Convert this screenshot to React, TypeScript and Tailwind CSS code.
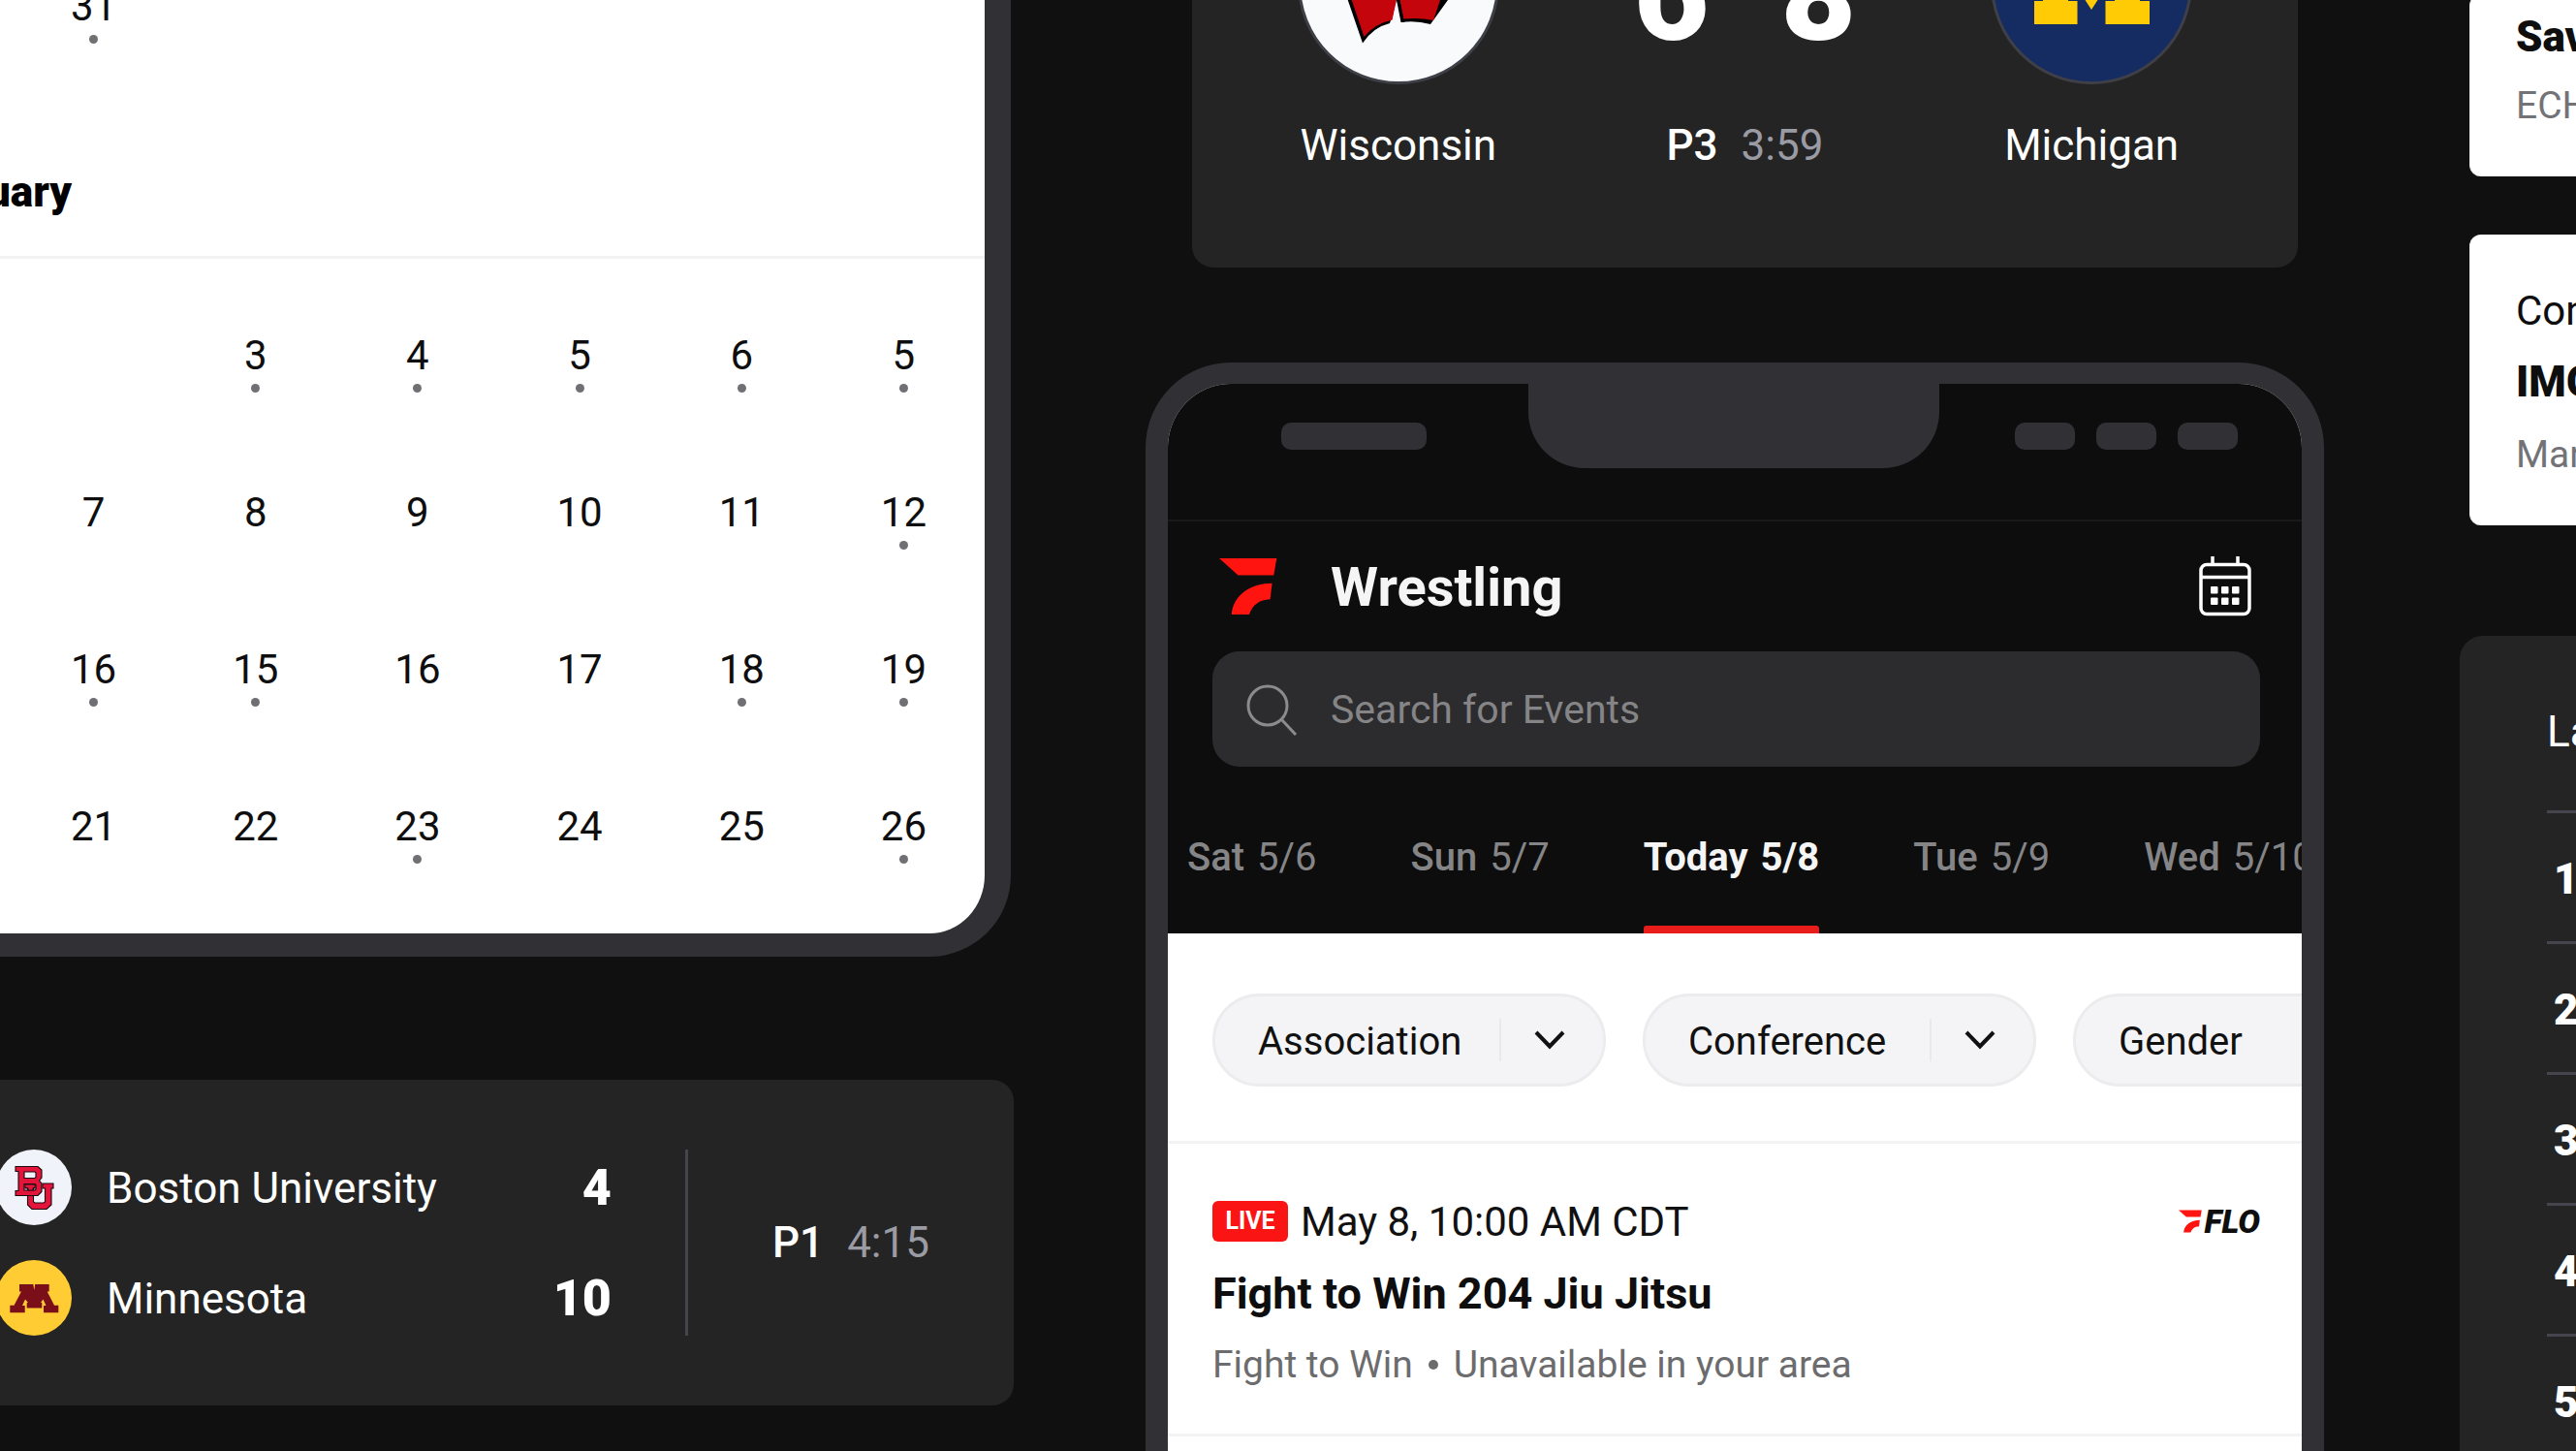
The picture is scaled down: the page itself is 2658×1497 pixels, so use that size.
import React from "react";

type Day = { n: number; dot?: boolean };

const januaryDays: (Day | null)[] = [{ n: 31, dot: true }];

const februaryDays: (Day | null)[] = [
  null,
  { n: 3, dot: true },
  { n: 4, dot: true },
  { n: 5, dot: true },
  { n: 6, dot: true },
  { n: 5, dot: true },
  { n: 7 },
  { n: 8 },
  { n: 9 },
  { n: 10 },
  { n: 11 },
  { n: 12, dot: true },
  { n: 16, dot: true },
  { n: 15, dot: true },
  { n: 16 },
  { n: 17 },
  { n: 18, dot: true },
  { n: 19, dot: true },
  { n: 21 },
  { n: 22 },
  { n: 23, dot: true },
  { n: 24 },
  { n: 25 },
  { n: 26, dot: true },
];

const tabs = [
  { day: "Sat", date: "5/6" },
  { day: "Sun", date: "5/7" },
  { day: "Today", date: "5/8", active: true },
  { day: "Tue", date: "5/9" },
  { day: "Wed", date: "5/10" },
];

function DayGrid({ days }: { days: (Day | null)[] }) {
  return (
    <div className="grid grid-cols-6 gap-y-[100px] pl-[13px]">
      {days.map((d, i) =>
        d ? (
          <button key={i} type="button" className="flex h-[62px] flex-col items-center gap-[5px] text-[42px] leading-[48px] text-[#0e0e0e]">
            <span>{d.n}</span>
            {d.dot && <span className="size-[9px] rounded-full bg-[#6f6f74]" />}
          </button>
        ) : (
          <div key={i} />
        ),
      )}
    </div>
  );
}

function FloMark({ className }: { className: string }) {
  return (
    <svg viewBox="55 42 178 178" className={className} fill="#ff1410" aria-hidden="true">
      <path d="M55 45H231L222 97H113Z" />
      <path d="M93 217C97 158 150 121 217 121L211 170C178 171 156 188 147 217Z" />
    </svg>
  );
}

function BostonCrest() {
  return (
    <svg viewBox="0 0 78 78" className="size-[78px] shrink-0" role="img" aria-label="Boston University">
      <circle cx="39" cy="39" r="39" fill="#f0f3f9" />
      <g fill="#e4153a" stroke="#1c0a10" strokeWidth="1.1" fillRule="evenodd">
        <path d="M30 35H40V40H38.5V54L40 55H49L50.5 54V40H48V35H59V40H57V57L52 61.5H37L32.5 57V40H30Z" />
        <path d="M20 17.5H43L47 21V29L44.5 32L47 35V43.5L43 47.5H20V42.5H23V22.5H20ZM29 23V29.5H40L41 28.5V24L40 23ZM29 35.5V42H40L41 41V36.5L40 35.5Z" />
        <path d="M30 36H40V39.5H38V42H33V39.5H30Z" strokeWidth="0.8" />
      </g>
    </svg>
  );
}

function MinnesotaCrest() {
  return (
    <svg viewBox="0 0 78 78" className="size-[78px] shrink-0" role="img" aria-label="Minnesota">
      <circle cx="39" cy="39" r="39" fill="#ffcc33" />
      <path
        d="M24 25H38.3L39.3 31 40.2 25H54.7V32.5H52.7L60 46.7H64.3V54.3H49V47H51.5L48.5 40.5 46 44H47.3V49.5H31.7V44H33L30 40.5 27 47H29.7V54.3H14.3V46.7H18.5L26 32.5H24Z"
        fill="#7a0f1a"
      />
    </svg>
  );
}

function WisconsinCrest() {
  return (
    <svg viewBox="0 0 208 208" className="size-[208px]" role="img" aria-label="Wisconsin">
      <circle cx="104" cy="104" r="102.5" fill="#f9fafc" stroke="#3f3f47" strokeWidth="3" />
      <path d="M20 40H86L96 78 108 40H190L155 121 137 146Q122 142 107 144L102 124 95 145Q78 149 67 165.500L50 116Z" fill="#000" />
      <path d="M26 44H82L95 92 110 44H184L147 121 140 142Q126 139 109 140.500L104 114 102 121 98 141.500Q80 145 68.500 159L54 116Z" fill="#c5050c" />
      <path d="M102 121 97.500 142 107 144 105 128Z" fill="#f9fafc" />
      <path d="M105.500 121H102L103 126 106.500 144H110Z" fill="#000" />
    </svg>
  );
}

function MichiganCrest() {
  return (
    <svg viewBox="0 0 208 208" className="size-[208px]" role="img" aria-label="Michigan">
      <circle cx="104" cy="104" r="102.500" fill="#152c62" stroke="#3f3f47" strokeWidth="3" />
      <path
        d="M45 60H80L104 94 128 60H163V82H154V122H164V146H118.500V122H128V94L104 131 80 94V122H89.500V146H45V122H54V82H45Z"
        fill="#ffcb05"
      />
    </svg>
  );
}

function CalendarIcon() {
  return (
    <svg viewBox="0 0 54 62" className="h-[62px] w-[54px]" fill="none" stroke="#fff" strokeWidth="3.500" aria-hidden="true">
      <rect x="2" y="8.500" width="50" height="51" rx="6" />
      <path d="M2 21.500H52M14 0V9M40 0V9" />
      <g fill="#fff" stroke="none">
        <rect x="12" y="31" width="7.500" height="7.500" rx="1" />
        <rect x="23" y="31" width="7.500" height="7.500" rx="1" />
        <rect x="34" y="31" width="7.500" height="7.500" rx="1" />
        <rect x="12" y="42.500" width="7.500" height="7.500" rx="1" />
        <rect x="23" y="42.500" width="7.500" height="7.500" rx="1" />
        <rect x="34" y="42.500" width="7.500" height="7.500" rx="1" />
      </g>
    </svg>
  );
}

function SearchIcon() {
  return (
    <svg viewBox="0 0 54 54" className="size-[54px] shrink-0" fill="none" stroke="#8b8b8d" strokeWidth="3" aria-hidden="true">
      <circle cx="23" cy="23" r="20" />
      <path d="M37.500 37.500 52 53" />
    </svg>
  );
}

function FilterSelect({ label }: { label: string }) {
  return (
    <div className="flex h-24 w-[406px] shrink-0 items-center rounded-full border-[3px] border-[#ececee] bg-[#f4f4f6]">
      <select aria-label={label} className="h-full min-w-0 flex-1 appearance-none bg-transparent pt-[3px] pl-[44px] text-[40px] text-[#111] outline-none">
        <option>{label}</option>
      </select>
      <span className="h-11 w-[2px] bg-[#e9e9eb]" />
      <span className="flex w-[105px] justify-center pr-[6px]">
        <svg viewBox="0 0 32 22" className="h-[22px] w-8" fill="none" stroke="#111" strokeWidth="4" aria-hidden="true">
          <path d="M2 3 16 17.500 30 3" />
        </svg>
      </span>
    </div>
  );
}

function TeamRow({ crest, name, score }: { crest: React.ReactNode; name: string; score: number }) {
  return (
    <div className="flex h-[78px] items-center gap-9 text-white">
      {crest}
      <span className="flex-1 pt-[2px] text-[44px]">{name}</span>
      <span className="pt-[2px] text-[52px] font-black">{score}</span>
    </div>
  );
}

function Clock({ period, time }: { period: string; time: string }) {
  return (
    <p className="flex items-center justify-center gap-6 text-[44px] leading-[52px]">
      <span className="font-medium text-white">{period}</span>
      <span className="text-[#9b9ba4]">{time}</span>
    </p>
  );
}

function LeftColumn() {
  return (
    <section className="-mt-[17px]">
      <div className="mr-[3px] overflow-hidden rounded-br-[84px] border-r-[27px] border-b-[24px] border-[#313035] bg-white">
        <DayGrid days={januaryDays} />
        <div className="mt-[127px] flex w-[74px] justify-end">
          <h2 className="text-[44px] leading-[52px] font-black text-black">February</h2>
        </div>
        <div className="mt-10 border-t-[3px] border-[#f3f3f3] pt-[76px] pb-[72px]">
          <DayGrid days={februaryDays} />
        </div>
      </div>
      <div className="mt-[127px] grid grid-cols-[minmax(0,710fr)_minmax(0,336fr)] rounded-r-[22px] bg-[#242424] py-[72px]">
        <div className="-ml-1 flex flex-col gap-9 border-r-[3px] border-[#46454d] pr-[76px]">
          <TeamRow crest={<BostonCrest />} name="Boston University" score={4} />
          <TeamRow crest={<MinnesotaCrest />} name="Minnesota" score={10} />
        </div>
        <div className="flex items-center justify-center">
          <Clock period="P1" time="4:15" />
        </div>
      </div>
    </section>
  );
}

function ScoreCard() {
  return (
    <div className="mr-[27px] ml-12 -mt-[188px] grid grid-cols-3 rounded-[22px] bg-[#242424] px-[34px] pt-[67px] pb-[100px] text-center text-white">
      <div className="flex flex-col items-center gap-[37px]">
        <WisconsinCrest />
        <p className="text-[44px] leading-[52px]">Wisconsin</p>
      </div>
      <div className="flex flex-col gap-[37px]">
        <div className="flex h-[208px] items-center justify-center gap-[74px] pt-6 text-[134px] font-black">
          <span>6</span>
          <span>8</span>
        </div>
        <Clock period="P3" time="3:59" />
      </div>
      <div className="flex flex-col items-center gap-[37px]">
        <MichiganCrest />
        <p className="text-[44px] leading-[52px]">Michigan</p>
      </div>
    </div>
  );
}

function PhoneStatus() {
  return (
    <div className="grid h-[142px] grid-cols-[minmax(0,372fr)_minmax(0,424fr)_minmax(0,374fr)] border-b-2 border-[#191919]">
      <div className="pt-10 pl-[117px]">
        <div className="h-7 w-[150px] rounded-[10px] bg-[#313035]" />
      </div>
      <div className="h-[87px] rounded-b-[58px] bg-[#313035]" />
      <div className="flex justify-end gap-[22px] pt-10 pr-[66px]">
        <div className="h-7 w-[62px] rounded-[10px] bg-[#313035]" />
        <div className="h-7 w-[62px] rounded-[10px] bg-[#313035]" />
        <div className="h-7 w-[62px] rounded-[10px] bg-[#313035]" />
      </div>
    </div>
  );
}

function Phone() {
  return (
    <div className="mt-[98px] h-[1300px] overflow-hidden rounded-t-[88px] border-x-[23px] border-t-[22px] border-[#313035] bg-white">
      <div className="bg-[#0d0d0d]">
        <PhoneStatus />
        <header className="flex h-[134px] items-center pr-[52px] pl-[53px]">
          <FloMark className="size-[60px]" />
          <h1 className="flex-1 pt-[2px] pl-[55px] text-[56px] leading-[64px] font-bold text-[#f5f5f5]">Wrestling</h1>
          <button type="button" aria-label="Open calendar">
            <CalendarIcon />
          </button>
        </header>
        <label className="mr-[43px] ml-[46px] flex h-[119px] items-center gap-[34px] rounded-[28px] bg-[#2c2c2e] pl-[34px]">
          <SearchIcon />
          <input
            type="text"
            aria-label="Search for Events"
            placeholder="Search for Events"
            className="min-w-0 flex-1 bg-transparent pt-[3px] text-[41px] text-white outline-none placeholder:text-[#858587]"
          />
        </label>
        <nav className="flex gap-[97px] overflow-hidden pl-5">
          {tabs.map((t) => (
            <button
              key={t.day}
              type="button"
              className={
                t.active
                  ? "flex shrink-0 flex-col gap-[46px] pt-[70px] text-[40px] leading-[48px] font-bold text-[#f5f5f5]"
                  : "flex shrink-0 flex-col gap-[46px] pt-[70px] text-[40px] leading-[48px] text-[#858587]"
              }
            >
              <span className="flex gap-[13px]">
                <span className={t.active ? "font-bold" : "font-medium"}>{t.day}</span>
                <span>{t.date}</span>
              </span>
              <span className={t.active ? "h-2 w-full rounded-t-[3px] bg-[#e91c1c]" : "h-2"} />
            </button>
          ))}
        </nav>
      </div>
      <div className="flex gap-[38px] overflow-hidden border-b-[3px] border-[#f3f3f4] pt-[62px] pb-14 pl-[46px]">
        <FilterSelect label="Association" />
        <FilterSelect label="Conference" />
        <FilterSelect label="Gender" />
      </div>
      <article className="flex flex-col gap-[23px] border-b-[3px] border-[#f3f3f4] pt-[54px] pr-[43px] pb-[47px] pl-[46px]">
        <div className="flex h-[52px] items-center">
          <span className="flex h-[42px] w-[78px] items-center justify-center rounded-[6px] bg-[#fb1414] text-[25px] font-bold text-white">LIVE</span>
          <time className="flex-1 pl-[13px] text-[42px] text-[#111]">May 8, 10:00 AM CDT</time>
          <span className="flex items-center text-[34px] leading-none font-black text-[#0e0e0e] italic">
            <FloMark className="mr-[2px] size-6" />
            FLO
          </span>
        </div>
        <h3 className="text-[45px] leading-[52px] font-bold text-[#0e0e0e]">Fight to Win 204 Jiu Jitsu</h3>
        <p className="flex items-center gap-4 text-[39px] leading-[48px] text-[#6c6c6e]">
          <span>Fight to Win</span>
          <span className="size-[10px] rounded-full bg-[#6c6c6e]" />
          <span>Unavailable in your area</span>
        </p>
      </article>
    </div>
  );
}

function RightColumn() {
  return (
    <section className="overflow-hidden pl-1 whitespace-nowrap">
      <div className="ml-[10px] rounded-l-[12px] border-l border-[#e8e8e8] bg-white pl-[47px]">
        <h3 className="-mt-[6px] pt-4 text-[44px] leading-[56px] font-black text-[#0e0e0e]">Sav</h3>
        <p className="pt-[19px] pb-[49px] text-[39px] leading-[48px] text-[#737377]">ECH</p>
      </div>
      <div className="mt-[60px] ml-[10px] rounded-l-[12px] border-l border-[#e8e8e8] bg-white pt-[55px] pb-[49px] pl-[47px]">
        <p className="text-[42px] leading-[48px] text-[#0e0e0e]">Con</p>
        <h3 className="mt-[23px] text-[44px] leading-[52px] font-black text-[#0e0e0e]">IMG</h3>
        <p className="mt-[25px] text-[39px] leading-[48px] text-[#737377]">Mar</p>
      </div>
      <div className="mt-[114px] rounded-tl-[24px] bg-[#242424] pl-[90px] text-white">
        <h2 className="pt-[73px] pb-[55px] text-[44px] leading-[52px]">La</h2>
        <ol className="h-[900px]">
          {[1, 2, 3, 4, 5].map((n) => (
            <li key={n} className="flex h-[135px] items-center border-t-[3px] border-[#46454d] pt-1 pl-[7px] text-[44px] font-black">
              {n}
            </li>
          ))}
        </ol>
      </div>
    </section>
  );
}

export default function App() {
  return (
    <main className="grid h-screen grid-cols-[minmax(0,1046fr)_minmax(0,1216fr)_minmax(0,124fr)] gap-x-[136px] overflow-hidden bg-[#101010] font-['Roboto',sans-serif]">
      <LeftColumn />
      <section>
        <ScoreCard />
        <Phone />
      </section>
      <RightColumn />
    </main>
  );
}
